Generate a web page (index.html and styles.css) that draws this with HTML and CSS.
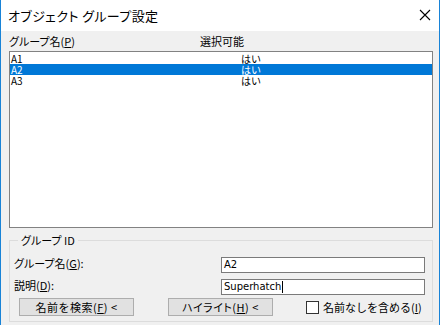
FILE: index.html
```html
<!DOCTYPE html>
<html lang="ja">
<head>
    <meta charset="UTF-8">
    <title>オブジェクト グループ設定</title>
    <link rel="stylesheet" href="styles.css">
</head>
<body>

    <!-- Dialog window -->
    <div class="window">
        <div class="titlebar">
            <span class="title">オブジェクト グループ設定</span>
            <svg class="close" width="12" height="12" viewBox="0 0 12 12">
                <path d="M1 1 L11 11 M11 1 L1 11" stroke="#000" stroke-width="1.1" fill="none"/>
            </svg>
        </div>

        <div class="content">
            <div class="list-header">
                <span>グループ名(<u>P</u>)</span>
                <span>選択可能</span>
            </div>

            <!-- Group list -->
            <div class="listbox">
                <div class="row"><span>A1</span><span>はい</span></div>
                <div class="row selected"><span>A2</span><span>はい</span></div>
                <div class="row"><span>A3</span><span>はい</span></div>
            </div>

            <!-- Group ID box -->
            <fieldset class="groupbox">
                <legend>グループ ID</legend>
                <div class="field-row">
                    <label>グループ名(<u>G</u>):</label>
                    <div class="textbox">A2</div>
                </div>
                <div class="field-row">
                    <label>説明(<u>D</u>):</label>
                    <div class="textbox">Superhatch<span class="caret"></span></div>
                </div>
                <div class="button-row">
                    <button class="btn btn-find">名前を検索(<u>F</u>) &lt;</button>
                    <button class="btn btn-highlight">ハイライト(<u>H</u>) &lt;</button>
                    <label class="check"><span class="box"></span>名前なしを含める(<u>I</u>)</label>
                </div>
            </fieldset>
        </div>
    </div>

</body>
</html>
```

FILE: styles.css
```css
body {
    margin: 0;
    font-family: "Noto Sans CJK JP", "DejaVu Sans", sans-serif;
    font-size: 11px;
    color: #000;
    background: #ffffff;
}

.window {
    width: 440px;
    height: 325px;
    box-sizing: border-box;
    border-left: 1px solid #1883d7;
    border-right: 1px solid #1883d7;
    background-color: #f0f0f0;
    overflow: hidden;
}

/* title bar */
.titlebar {
    height: 31px;
    background-color: #fff;
    display: flex;
    align-items: center;
    justify-content: space-between;
    padding: 0 8px 0 7px;
}

.title {
    font-size: 13px;
    font-feature-settings: "palt";
    letter-spacing: 0.4px;
}

.close {
    margin-top: -1px;
}

.content {
    padding: 3px 7px 0 8px;
}

.list-header {
    display: grid;
    grid-template-columns: 191px 1fr;
    height: 17px;
    line-height: 15px;
    font-feature-settings: "palt";
}

.listbox {
    height: 175px;
    width: 422px;
    border: 1px solid #828282;
    background-color: #fff;
}

.row {
    display: grid;
    grid-template-columns: 230px 1fr;
    height: 11px;
    line-height: 11px;
    font-size: 10px;
    padding-left: 1px;
}

.row:first-child {
    margin-top: 1px;
}

.row.selected {
    background-color: #0078d7;
    color: #fff;
}

/* group box */
.groupbox {
    margin: 6px 0 0 0;
    width: 424px;
    box-sizing: border-box;
    height: 88px;
    border: 1px solid #dcdcdc;
    padding: 11px 7px 0 4px;
}

.groupbox legend {
    padding: 0 3px;
    margin-left: 4px;
    line-height: 12px;
    font-feature-settings: "palt";
}

.field-row {
    display: flex;
    justify-content: space-between;
    align-items: flex-start;
    height: 22px;
}

.field-row label {
    font-feature-settings: "palt";
    line-height: 13px;
}

.textbox {
    width: 204px;
    height: 16px;
    box-sizing: border-box;
    border: 1px solid #7a7a7a;
    background-color: #fff;
    padding-left: 2px;
    font-family: "DejaVu Sans", sans-serif;
    font-size: 10px;
    line-height: 14px;
    display: flex;
    align-items: center;
}

.caret {
    display: inline-block;
    width: 1px;
    height: 12px;
    background-color: #000;
    margin-left: 1px;
}

.button-row {
    display: flex;
    align-items: center;
    margin-top: -3px;
}

.btn {
    height: 18px;
    padding: 0;
    background-color: #e1e1e1;
    border: 1px solid #adadad;
    border-radius: 0;
    font-family: "Noto Sans CJK JP", "DejaVu Sans", sans-serif;
    font-size: 11px;
    line-height: 14px;
    color: #000;
    letter-spacing: 0.5px;
}

.btn-find {
    width: 115px;
    margin-left: 5px;
}

.btn-highlight {
    width: 105px;
    margin-left: 34px;
    font-feature-settings: "palt";
}

.check {
    display: flex;
    align-items: center;
    margin-left: 33px;
}

.check .box {
    width: 11px;
    height: 11px;
    border: 1px solid #333;
    background-color: #fff;
    margin-right: 4px;
}
```
